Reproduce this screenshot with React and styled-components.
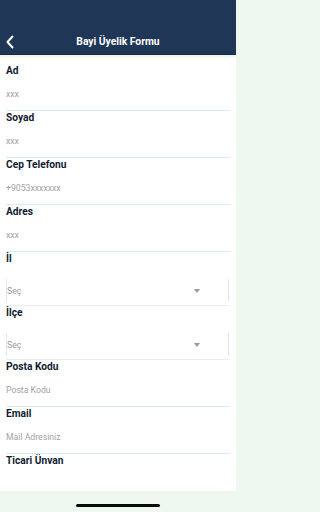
import React from "react";
import styled, { createGlobalStyle } from "styled-components";

const Global = createGlobalStyle`
  html, body { margin: 0; padding: 0; background: #eef8ee; }
  body { font-family: Roboto, "Liberation Sans", sans-serif; }
  * { box-sizing: border-box; }
`;

const Screen = styled.div`
  width: 236px;
  height: 512px;
  overflow: hidden;
  position: relative;
  background: #eef8ee;
  display: flex;
  flex-direction: column;
`;

const Header = styled.header`
  height: 55px;
  background: #1f3657;
  border-bottom: 1px solid #162843;
  display: flex;
  flex-direction: column;
  justify-content: flex-end;
  flex-shrink: 0;
`;

const NavBar = styled.div`
  height: 24px;
  position: relative;
  display: flex;
  align-items: center;
  justify-content: center;
`;

const BackButton = styled.div`
  position: absolute;
  left: 5px;
  top: 5px;
  width: 10px;
  height: 14px;
  display: flex;
`;

const Title = styled.h1`
  margin: 0;
  color: #ffffff;
  font-family: Roboto, sans-serif;
  font-weight: 700;
  font-size: 10.3px;
  line-height: 12px;
`;

const Content = styled.main`
  margin-top: 2px;
  flex: 1;
  background: #ffffff;
  padding: 7px 6px 0 6px;
  display: flex;
  flex-direction: column;
`;

const Field = styled.div`
  display: flex;
  flex-direction: column;
  border-bottom: 1px solid ${(p) => (p.$select ? "#ececec" : "#d5ecef")};
`;

const Label = styled.label`
  color: #121c30;
  font-weight: 700;
  font-size: 10.2px;
  line-height: 14px;
  height: 14px;
`;

const InputText = styled.div`
  height: 32px;
  display: flex;
  align-items: center;
  color: #a3a3a3;
  font-size: 8.7px;
`;

const SelectBox = styled.div`
  margin-top: 13px;
  margin-bottom: 3px;
  height: 23px;
  border-left: 1px solid #dde8f4;
  border-right: 1px solid #dde8f4;
  margin-right: 1px;
  display: flex;
  align-items: center;
  justify-content: space-between;
  padding: 0 28px 0 0;
  color: #9a9a9a;
  font-size: 8.7px;
`;

const Arrow = styled.span`
  width: 0;
  height: 0;
  border-left: 3.5px solid transparent;
  border-right: 3.5px solid transparent;
  border-top: 4px solid #9b9b9b;
`;

const BottomBar = styled.div`
  position: absolute;
  left: 0;
  right: 0;
  bottom: 0;
  height: 21px;
  background: #eef8ee;
  display: flex;
  justify-content: center;
`;

const HomeIndicator = styled.div`
  margin-top: 13px;
  width: 84px;
  height: 3px;
  border-radius: 2px;
  background: #0a0a0a;
`;

const fields = [
  { label: "Ad", placeholder: "xxx" },
  { label: "Soyad", placeholder: "xxx" },
  { label: "Cep Telefonu", placeholder: "+9053xxxxxxx" },
  { label: "Adres", placeholder: "xxx" },
  { label: "İl", select: true },
  { label: "İlçe", select: true },
  { label: "Posta Kodu", placeholder: "Posta Kodu" },
  { label: "Email", placeholder: "Mail Adresiniz" },
  { label: "Ticari Ünvan", placeholder: "" },
];

export default function App() {
  return (
    <Screen>
      <Global />
      <Header>
        <NavBar>
          <BackButton>
            <svg width="10" height="14" viewBox="0 0 10 14">
              <path d="M7.5 1.5 L2.5 7 L7.5 12.5" fill="none" stroke="#fff" strokeWidth="2" strokeLinecap="round" strokeLinejoin="round" />
            </svg>
          </BackButton>
          <Title>Bayi Üyelik Formu</Title>
        </NavBar>
      </Header>
      <Content>
        {fields.map((f) => (
          <Field key={f.label} $select={f.select}>
            <Label>{f.label}</Label>
            {f.select ? (
              <SelectBox>
                <span>Seç</span>
                <Arrow />
              </SelectBox>
            ) : (
              <InputText>{f.placeholder}</InputText>
            )}
          </Field>
        ))}
      </Content>
      <BottomBar>
        <HomeIndicator />
      </BottomBar>
    </Screen>
  );
}
